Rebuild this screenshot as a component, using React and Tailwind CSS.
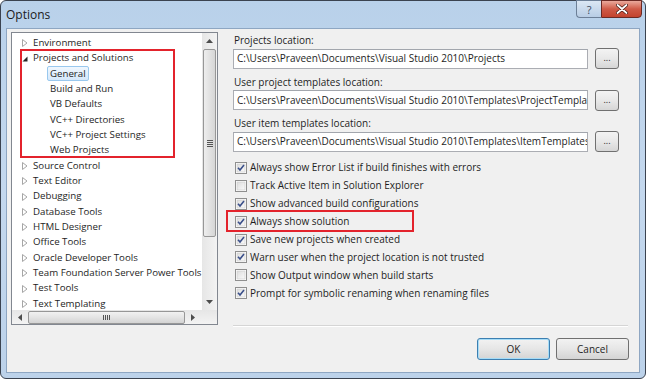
import React from "react";

const font = { fontFamily: '"Open Sans", "Noto Sans", sans-serif' };

function Collapsed() {
  return (
    <svg width="6" height="8" viewBox="0 0 6 8" className="shrink-0">
      <path d="M0.5 0.5 L5 4 L0.5 7.5 Z" fill="#fff" stroke="#a6a6a6" strokeWidth="1" />
    </svg>
  );
}
function Expanded() {
  return (
    <svg width="6" height="8" viewBox="0 0 6 8" className="shrink-0">
      <path d="M5.5 1.5 L5.5 6.5 L0.5 6.5 Z" fill="#262626" />
    </svg>
  );
}

function TreeRow({ label, kind, selected }) {
  if (kind === "child") {
    return (
      <div className="h-[15.35px] flex items-center pl-[38px]">
        <span
          className={
            selected
              ? "px-[2px] h-[15px] flex items-center border border-[#99c8ee] rounded-[2px] bg-gradient-to-b from-[#f0f7fe] to-[#d5e8fb] ml-[-3px]"
              : ""
          }
        >
          {label}
        </span>
      </div>
    );
  }
  return (
    <div className="h-[15.35px] flex items-center pl-[10px]">
      <span className="w-[11px] shrink-0 flex items-center">{kind === "open" ? <Expanded /> : <Collapsed />}</span>
      <span className="shrink-0">{label}</span>
    </div>
  );
}

function Checkbox({ checked }) {
  return (
    <svg width="12" height="12" viewBox="0 0 12 12" className="shrink-0">
      <defs>
        <linearGradient id="cbg" x1="0" y1="0" x2="1" y2="1">
          <stop offset="0" stopColor="#dcdcdc" />
          <stop offset="1" stopColor="#fbfbfb" />
        </linearGradient>
      </defs>
      <rect x="0.5" y="0.5" width="11" height="11" fill="#fff" stroke="#8f8f8f" />
      <rect x="2" y="2" width="8" height="8" fill="url(#cbg)" stroke="#c9c9c9" strokeWidth="0.6" />
      {checked && (
        <path d="M3 5.8 L5 8 L9 3" fill="none" stroke="#3a4f8a" strokeWidth="1.6" />
      )}
    </svg>
  );
}

function CheckRow({ checked, label }) {
  return (
    <div className="h-[17.9px] flex items-center gap-[3px]">
      <Checkbox checked={checked} />
      <span>{label}</span>
    </div>
  );
}

function PathField({ label, value }) {
  return (
    <div className="flex flex-col">
      <div className="h-[17px] flex items-end pl-[1px]">{label}</div>
      <div className="flex items-center gap-[7px] h-[21px]">
        <div className="w-[355px] h-[20px] border border-[#abadb3] border-t-[#a2a6ad] bg-white flex items-center pl-[3px] overflow-hidden whitespace-nowrap">
          {value}
        </div>
        <div className="w-[24px] h-[21px] rounded-[3px] border border-[#707070] bg-gradient-to-b from-[#f3f3f3] via-[#e8e8e8] to-[#d6d6d6] flex items-center justify-center text-[9px] leading-none pb-[2px]">
          ...
        </div>
      </div>
    </div>
  );
}

export default function App() {
  const tree = [
    { label: "Environment", kind: "closed" },
    { label: "Projects and Solutions", kind: "open" },
    { label: "General", kind: "child", selected: true },
    { label: "Build and Run", kind: "child" },
    { label: "VB Defaults", kind: "child" },
    { label: "VC++ Directories", kind: "child" },
    { label: "VC++ Project Settings", kind: "child" },
    { label: "Web Projects", kind: "child" },
    { label: "Source Control", kind: "closed" },
    { label: "Text Editor", kind: "closed" },
    { label: "Debugging", kind: "closed" },
    { label: "Database Tools", kind: "closed" },
    { label: "HTML Designer", kind: "closed" },
    { label: "Office Tools", kind: "closed" },
    { label: "Oracle Developer Tools", kind: "closed" },
    { label: "Team Foundation Server Power Tools", kind: "closed" },
    { label: "Test Tools", kind: "closed" },
    { label: "Text Templating", kind: "closed" },
  ];
  const checks = [
    [true, "Always show Error List if build finishes with errors"],
    [false, "Track Active Item in Solution Explorer"],
    [true, "Show advanced build configurations"],
    [true, "Always show solution"],
    [true, "Save new projects when created"],
    [true, "Warn user when the project location is not trusted"],
    [false, "Show Output window when build starts"],
    [true, "Prompt for symbolic renaming when renaming files"],
  ];

  return (
    <div className="w-[650px] h-[381px] bg-white overflow-hidden text-[10px] text-[#1e1e1e]" style={font}>
      <div className="w-[646px] h-[379px] rounded-[6px] border border-[#3b4350] bg-gradient-to-b from-[#b9d1ea] via-[#c4d8ee] to-[#bcd2ea] flex flex-col">
        {/* title bar */}
        <div className="h-[27px] flex items-start relative shrink-0">
          <div className="pl-[5px] pt-[5px] text-[12px] text-[#1b1b1b]">Options</div>
          <div className="absolute right-[3px] top-[-1px] flex">
            <div className="w-[25px] h-[18px] rounded-bl-[4px] border border-[#6c7f97] border-r-0 bg-gradient-to-b from-[#dbe7f4] to-[#b8cde5] flex items-center justify-center text-[11px] text-[#3a4a60] leading-none">
              ?
            </div>
            <div className="w-[41px] h-[18px] rounded-br-[4px] border border-[#6b2a24] bg-gradient-to-b from-[#e9a99c] via-[#cf5a47] to-[#c3432e] flex items-center justify-center">
              <svg width="12" height="10" viewBox="0 0 12 10">
                <path d="M1.5 1 L10.5 9 M10.5 1 L1.5 9" stroke="#3d120c" strokeWidth="3.2" strokeLinecap="round" />
                <path d="M1.5 1 L10.5 9 M10.5 1 L1.5 9" stroke="#fff" strokeWidth="1.8" strokeLinecap="round" />
              </svg>
            </div>
          </div>
        </div>
        {/* client */}
        <div className="mx-[5px] mb-[5px] flex-1 border border-[#8ea6c2] bg-[#f0f0f0] flex">
          {/* tree */}
          <div className="ml-[4px] mt-[3px] w-[207px] h-[293px] shrink-0 border border-[#828790] bg-white flex flex-col text-[9.7px]">
            <div className="flex flex-1 min-h-0">
              <div className="flex-1 overflow-hidden pt-[2.5px] whitespace-nowrap relative">
                {tree.map((t) => (
                  <TreeRow key={t.label} {...t} />
                ))}
                <div className="absolute left-[8px] top-[16px] w-[155px] h-[109px] border-2 border-[#e3232c]" />
              </div>
              {/* vscroll */}
              <div className="w-[15px] shrink-0 bg-gradient-to-r from-[#e6e6e6] to-[#f3f3f3] flex flex-col items-center">
                <div className="h-[16px] flex items-center justify-center">
                  <svg width="7" height="4" viewBox="0 0 7 4"><path d="M0 4 L3.5 0 L7 4 Z" fill="#4d4d4d" /></svg>
                </div>
                <div className="w-[13px] h-[188px] rounded-[2px] border border-[#979797] bg-gradient-to-r from-[#eeeeee] via-[#e2e2e2] to-[#d6d6d6] flex items-center justify-center">
                  <div className="flex flex-col gap-[1px]">
                    <div className="w-[6px] h-[1px] bg-[#555]" />
                    <div className="w-[6px] h-[1px] bg-[#555]" />
                    <div className="w-[6px] h-[1px] bg-[#555]" />
                    <div className="w-[6px] h-[1px] bg-[#555]" />
                  </div>
                </div>
                <div className="flex-1" />
                <div className="h-[16px] flex items-center justify-center">
                  <svg width="7" height="4" viewBox="0 0 7 4"><path d="M0 0 L3.5 4 L7 0 Z" fill="#4d4d4d" /></svg>
                </div>
              </div>
            </div>
            {/* hscroll */}
            <div className="h-[14px] bg-gradient-to-b from-[#e6e6e6] to-[#f3f3f3] flex items-center">
              <div className="w-[16px] flex items-center justify-center">
                <svg width="4" height="7" viewBox="0 0 4 7"><path d="M4 0 L0 3.5 L4 7 Z" fill="#4d4d4d" /></svg>
              </div>
              <div className="w-[157px] h-[13px] rounded-[2px] border border-[#979797] bg-gradient-to-b from-[#f2f2f2] via-[#e4e4e4] to-[#d3d3d3] flex items-center justify-center gap-[1px]">
                <div className="w-[1px] h-[5px] bg-[#555]" />
                <div className="w-[1px] h-[5px] bg-[#555]" />
                <div className="w-[1px] h-[5px] bg-[#555]" />
                <div className="w-[1px] h-[5px] bg-[#555]" />
              </div>
              <div className="w-[16px] flex items-center justify-center">
                <svg width="4" height="7" viewBox="0 0 4 7"><path d="M0 0 L4 3.5 L0 7 Z" fill="#4d4d4d" /></svg>
              </div>
              <div className="flex-1" />
            </div>
          </div>
          {/* right */}
          <div className="flex-1 flex flex-col pl-[15px] pr-[9px]">
            <div className="flex flex-col gap-[3.5px] pt-[2px]">
              <PathField label="Projects location:" value="C:\Users\Praveen\Documents\Visual Studio 2010\Projects" />
              <PathField label="User project templates location:" value="C:\Users\Praveen\Documents\Visual Studio 2010\Templates\ProjectTemplates" />
              <PathField label="User item templates location:" value="C:\Users\Praveen\Documents\Visual Studio 2010\Templates\ItemTemplates" />
            </div>
            <div className="mt-[7px] pl-[2px] flex flex-col relative">
              {checks.map(([c, l]) => (
                <CheckRow key={l} checked={c} label={l} />
              ))}
              <div className="absolute left-[-7px] top-[51px] w-[188px] h-[22px] border-2 border-[#e3232c]" />
            </div>
            <div className="flex-1" />
            <div className="h-[1px] bg-[#d5d5d5] border-b border-white box-content mr-[2px]" />
            <div className="flex justify-end gap-[6px] pt-[11px] pb-[12px] mr-[1px]">
              <div className="w-[73px] h-[22px] rounded-[3px] border border-[#3c7fb1] bg-gradient-to-b from-[#f2f2f2] via-[#e6e6e6] to-[#d4d4d4] flex items-center justify-center shadow-[inset_0_0_0_1px_#a6dcf7]">
                OK
              </div>
              <div className="w-[73px] h-[22px] rounded-[3px] border border-[#707070] bg-gradient-to-b from-[#f2f2f2] via-[#e6e6e6] to-[#d4d4d4] flex items-center justify-center">
                Cancel
              </div>
            </div>
          </div>
        </div>
      </div>
    </div>
  );
}
